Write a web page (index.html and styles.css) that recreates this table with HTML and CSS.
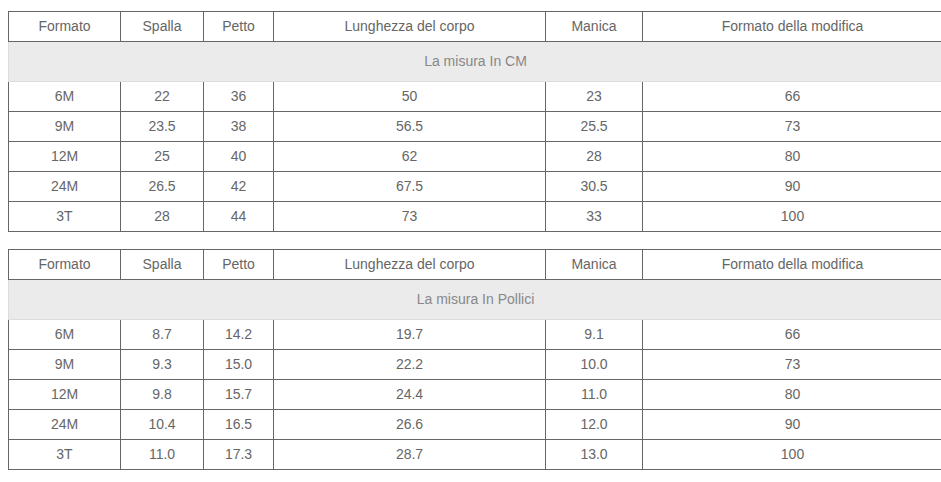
FILE: index.html
```html
<!DOCTYPE html>
<html lang="it">
<head>
<meta charset="utf-8">
<link rel="stylesheet" href="styles.css">
</head>
<body>
<div class="wrap">
<table class="size-table">
  <colgroup><col class="c1"><col class="c2"><col class="c3"><col class="c4"><col class="c5"><col class="c6"></colgroup>
  <tr><td>Formato</td><td>Spalla</td><td>Petto</td><td>Lunghezza del corpo</td><td>Manica</td><td>Formato della modifica</td></tr>
  <tr class="unit"><td colspan="6">La misura In CM</td></tr>
  <tr><td>6M</td><td>22</td><td>36</td><td>50</td><td>23</td><td>66</td></tr>
  <tr><td>9M</td><td>23.5</td><td>38</td><td>56.5</td><td>25.5</td><td>73</td></tr>
  <tr><td>12M</td><td>25</td><td>40</td><td>62</td><td>28</td><td>80</td></tr>
  <tr><td>24M</td><td>26.5</td><td>42</td><td>67.5</td><td>30.5</td><td>90</td></tr>
  <tr><td>3T</td><td>28</td><td>44</td><td>73</td><td>33</td><td>100</td></tr>
</table>
<table class="size-table">
  <colgroup><col class="c1"><col class="c2"><col class="c3"><col class="c4"><col class="c5"><col class="c6"></colgroup>
  <tr><td>Formato</td><td>Spalla</td><td>Petto</td><td>Lunghezza del corpo</td><td>Manica</td><td>Formato della modifica</td></tr>
  <tr class="unit"><td colspan="6">La misura In Pollici</td></tr>
  <tr><td>6M</td><td>8.7</td><td>14.2</td><td>19.7</td><td>9.1</td><td>66</td></tr>
  <tr><td>9M</td><td>9.3</td><td>15.0</td><td>22.2</td><td>10.0</td><td>73</td></tr>
  <tr><td>12M</td><td>9.8</td><td>15.7</td><td>24.4</td><td>11.0</td><td>80</td></tr>
  <tr><td>24M</td><td>10.4</td><td>16.5</td><td>26.6</td><td>12.0</td><td>90</td></tr>
  <tr><td>3T</td><td>11.0</td><td>17.3</td><td>28.7</td><td>13.0</td><td>100</td></tr>
</table>
</div>
</body>
</html>
```
FILE: styles.css
```css
html, body { overflow: hidden; }
body {
  margin: 0;
  background: #fff;
  font-family: "Liberation Sans", Arial, sans-serif;
  font-size: 14px;
  color: #666;
}
.wrap {
  padding: 11px 0 0 8px;
  display: flex;
  flex-direction: column;
  gap: 17px;
  width: 940px;
}
.size-table {
  border-collapse: collapse;
  table-layout: fixed;
  width: 934px;
}
.c1 { width: 112px; }
.c2 { width: 83px; }
.c3 { width: 70px; }
.c4 { width: 272px; }
.c5 { width: 97px; }
.c6 { width: 300px; }
.size-table td {
  border: 1px solid #666;
  height: 28px;
  padding: 0 0 1px;
  text-align: center;
  vertical-align: middle;
  line-height: 16px;
}
.size-table tr.unit td {
  background: #ebebeb;
  border-color: #dcdcdc;
  height: 38px;
  color: #888;
}
```
